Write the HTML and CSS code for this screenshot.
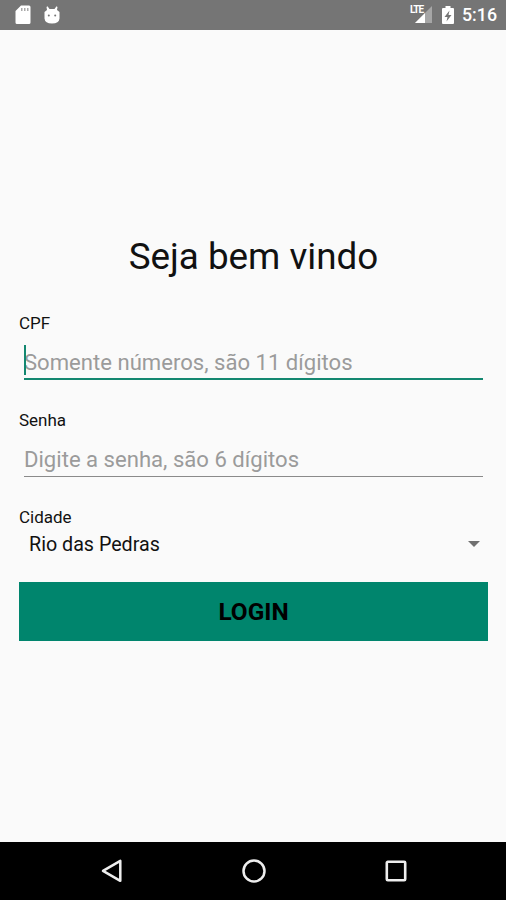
FILE: index.html
```
<!DOCTYPE html>
<html lang="pt-BR">
<head>
  <meta charset="UTF-8">
  <meta name="viewport" content="width=device-width, initial-scale=1.0">
  <title>Login</title>
  <link rel="stylesheet" href="styles.css">
</head>
<body>

  <header class="status-bar">
    <svg class="icon-sd" width="16" height="20" viewBox="0 0 16 20">
      <path fill="#fff" d="M6 .5h8a1.500 1.500 0 0 1 1.500 1.500v15.500a1.500 1.500 0 0 1-1.500 1.500H2a1.500 1.500 0 0 1-1.500-1.500V6z"/>
      <path fill="#aaa" d="M6 3h1.500v3H6zM9 3h1.500v3H9zM12 3h1.500v3H12z"/>
    </svg>
    <svg class="icon-android" width="16" height="18" viewBox="0 0 16 18">
      <path fill="#fff" d="M.5 6l2.500-2L2.500 1l1-.7L5.500 3h5l2-2.700 1 .7L13 4l2.500 2v6.500Q15 17.500 8 17.500T.5 12.500z"/>
      <circle cx="4.800" cy="9.500" r="1" fill="#757575"/>
      <circle cx="11.200" cy="9.500" r="1" fill="#757575"/>
    </svg>
    <div class="signal">
      <svg width="18" height="18" viewBox="0 0 18 18">
        <path fill="#a6a6a6" d="M18 0v17H1z"/>
        <path fill="#fff" d="M11 7v10H1z"/>
      </svg>
      <span class="lte">LTE</span>
    </div>
    <svg class="icon-battery" width="12" height="19" viewBox="0 0 12 19">
      <path fill="#fff" d="M3.500 0h5v2H11a1 1 0 0 1 1 1v14a1 1 0 0 1-1 1H1a1 1 0 0 1-1-1V3a1 1 0 0 1 1-1h2.500z"/>
      <path fill="#757575" d="M7.500 4.500L2.500 11h3L4.500 15.500l5-6.500h-3z"/>
    </svg>
    <span class="clock">5:16</span>
  </header>

  <main>
    <h1>Seja bem vindo</h1>

    <form class="login-form">
      <label for="cpf">CPF</label>
      <div class="field active">
        <input type="text" id="cpf" placeholder="Somente números, são 11 dígitos">
        <span class="caret"></span>
      </div>

      <label for="senha">Senha</label>
      <div class="field">
        <input type="password" id="senha" placeholder="Digite a senha, são 6 dígitos">
      </div>

      <label for="cidade">Cidade</label>
      <div class="select" id="cidade">
        <span>Rio das Pedras</span>
        <svg width="12" height="6" viewBox="0 0 12 6"><path fill="#707070" d="M0 0h12L6 6z"/></svg>
      </div>

      <button type="button" class="login">LOGIN</button>
    </form>
  </main>

  <nav class="nav-bar">
    <svg width="24" height="26" viewBox="0 0 24 26">
      <path fill="none" stroke="#eee" stroke-width="2.500" stroke-linejoin="round" d="M20.300 2.800v20L3 12.800z"/>
    </svg>
    <svg width="26" height="26" viewBox="0 0 26 26">
      <circle cx="13" cy="13" r="10.500" fill="none" stroke="#eee" stroke-width="2.500"/>
    </svg>
    <svg width="24" height="26" viewBox="0 0 24 26">
      <rect x="2.800" y="3.800" width="18.400" height="18.400" rx="1" fill="none" stroke="#eee" stroke-width="2.600"/>
    </svg>
  </nav>

</body>
</html>
```
FILE: styles.css
```
* {
  box-sizing: border-box;
}

body {
  display: flex;
  flex-direction: column;
  height: 100vh;
  margin: 0;
  font-family: Roboto, sans-serif;
  background-color: #fafafa;
  color: #111;
}

svg {
  display: block;
  flex: none;
}

.status-bar {
  display: flex;
  align-items: center;
  height: 30px;
  padding: 0 9px 0 15px;
  background-color: #757575;
  color: #fff;
}

.icon-android {
  margin-left: 13px;
}

.signal {
  position: relative;
  margin-left: auto;
}

.lte {
  position: absolute;
  left: -4px;
  top: -1px;
  font-size: 10px;
  font-weight: 700;
  line-height: 10px;
  letter-spacing: -1px;
}

.icon-battery {
  margin-left: 10px;
}

.clock {
  width: 35px;
  margin-left: 8px;
  font-size: 17.8px;
  font-weight: 500;
  line-height: 32px;
  white-space: nowrap;
}

main {
  flex: 1;
  padding: 205px 18px 0 19px;
}

h1 {
  margin: 0;
  font-size: 36.8px;
  font-weight: 400;
  line-height: 44px;
  text-align: center;
}

.login-form {
  display: flex;
  flex-direction: column;
  margin-top: 34px;
}

label {
  font-size: 17px;
  line-height: 20px;
}

.field {
  position: relative;
  height: 47px;
  margin: 0 5px 30px;
  border-bottom: 1px solid #8a8a8a;
  padding-top: 8px;
}

.field.active {
  border-bottom: 2px solid #138770;
}

input {
  display: block;
  width: 100%;
  height: 42px;
  padding: 0;
  border: none;
  outline: none;
  background: none;
  font-family: inherit;
  font-size: 22.1px;
}

input::placeholder {
  color: #9b9b9b;
  opacity: 1;
}

.caret {
  position: absolute;
  left: 0;
  top: 12px;
  width: 2px;
  height: 30px;
  background-color: #138770;
}

.select {
  display: flex;
  align-items: center;
  justify-content: space-between;
  height: 34px;
  padding: 0 8px 0 10px;
  font-size: 19.7px;
}

.login {
  height: 59px;
  margin-top: 21px;
  border: none;
  background-color: #00856d;
  color: #000;
  font-family: inherit;
  font-size: 24.4px;
  font-weight: 700;
}

.nav-bar {
  display: flex;
  align-items: center;
  justify-content: space-between;
  height: 58px;
  padding: 0 98px 0 100px;
  background-color: #000;
}
```
